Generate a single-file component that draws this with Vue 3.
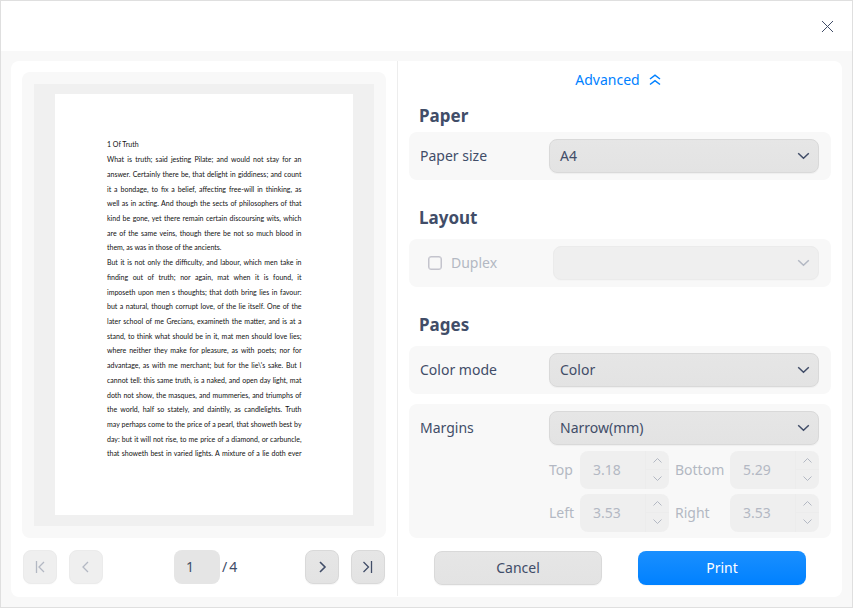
<script setup>
const lines = [
  '1 Of Truth',
  'What is truth; said jesting Pilate; and would not stay for an',
  'answer. Certainly there be, that delight in giddiness; and count',
  'it a bondage, to fix a belief, affecting free-will in thinking, as',
  'well as in acting. And though the sects of philosophers of that',
  'kind be gone, yet there remain certain discoursing wits, which',
  'are of the same veins, though there be not so much blood in',
  'them, as was in those of the ancients.',
  'But it is not only the difficulty, and labour, which men take in',
  'finding out of truth; nor again, mat when it is found, it',
  'imposeth upon men s thoughts; that doth bring lies in favour:',
  'but a natural, though corrupt love, of the lie itself. One of the',
  'later school of me Grecians, examineth the matter, and is at a',
  'stand, to think what should be in it, mat men should love lies;',
  'where neither they make for pleasure, as with poets; nor for',
  "advantage, as with me merchant; but for the lie\\'s sake. But I",
  'cannot tell: this same truth, is a naked, and open day light, mat',
  'doth not show, the masques, and mummeries, and triumphs of',
  'the world, half so stately, and daintily, as candlelights. Truth',
  'may perhaps come to the price of a pearl, that showeth best by',
  'day: but it will not rise, to me price of a diamond, or carbuncle,',
  'that showeth best in varied lights. A mixture of a lie doth ever',
]
const ragged = [0, 7]
const margins = [
  ['Top', '3.18'],
  ['Bottom', '5.29'],
  ['Left', '3.53'],
  ['Right', '3.53'],
]
</script>

<template>
  <div class="window">
    <header class="titlebar">
      <svg class="close" width="11" height="11" viewBox="0 0 11 11"><path d="M0 0L11 11M11 0L0 11" /></svg>
    </header>
    <main class="content">
      <section class="left">
        <div class="preview">
          <div class="backdrop">
            <div class="page">
              <p v-for="(line, i) in lines" :key="i" :class="['line', { ragged: ragged.includes(i) }]">{{ line }}</p>
            </div>
          </div>
        </div>
        <nav class="pager">
          <button class="btn nav off"><svg width="18" height="18" viewBox="0 0 18 18"><path d="M5.5 3V15M13 4L8 9L13 14" /></svg></button>
          <button class="btn nav off second"><svg width="18" height="18" viewBox="0 0 18 18"><path d="M11 4L6 9L11 14" /></svg></button>
          <div class="current">1</div>
          <div class="total"><span>/</span><span>4</span></div>
          <button class="btn nav next"><svg class="heavy" width="18" height="18" viewBox="0 0 18 18"><path d="M7 4L12 9L7 14" /></svg></button>
          <button class="btn nav last"><svg width="18" height="18" viewBox="0 0 18 18"><path d="M4.5 4L9.5 9L4.5 14M12.5 3V15" /></svg></button>
        </nav>
      </section>
      <section class="right">
        <div class="advanced">
          <span>Advanced</span>
          <svg width="12" height="12" viewBox="0 0 12 12"><path d="M1 5L6 1.2L11 5M1 10.5L6 6.7L11 10.5" /></svg>
        </div>
        <h2>Paper</h2>
        <div class="group row">
          <span class="label">Paper size</span>
          <div class="btn select">A4<svg width="13" height="8" viewBox="0 0 13 8"><path d="M1.2 1.2L6.5 6.3L11.8 1.2" /></svg></div>
        </div>
        <h2 class="spaced">Layout</h2>
        <div class="group row">
          <span class="check"></span>
          <span class="label muted">Duplex</span>
          <div class="btn select off short"><svg width="13" height="8" viewBox="0 0 13 8"><path d="M1.2 1.2L6.5 6.3L11.8 1.2" /></svg></div>
        </div>
        <h2 class="spaced">Pages</h2>
        <div class="group row">
          <span class="label">Color mode</span>
          <div class="btn select">Color<svg width="13" height="8" viewBox="0 0 13 8"><path d="M1.2 1.2L6.5 6.3L11.8 1.2" /></svg></div>
        </div>
        <div class="group margins">
          <div class="row">
            <span class="label">Margins</span>
            <div class="btn select">Narrow(mm)<svg width="13" height="8" viewBox="0 0 13 8"><path d="M1.2 1.2L6.5 6.3L11.8 1.2" /></svg></div>
          </div>
          <div class="spins">
            <template v-for="[name, value] in margins" :key="name">
              <span class="muted">{{ name }}</span>
              <div class="spin">
                <span class="value">{{ value }}</span>
                <span class="steps">
                  <svg width="9" height="5" viewBox="0 0 9 5"><path d="M.5 4.5L4.5 .5L8.5 4.5" /></svg>
                  <svg width="9" height="5" viewBox="0 0 9 5"><path d="M.5 .5L4.5 4.5L8.5 .5" /></svg>
                </span>
              </div>
            </template>
          </div>
        </div>
        <footer class="actions">
          <button class="btn action">Cancel</button>
          <button class="btn action primary">Print</button>
        </footer>
      </section>
    </main>
  </div>
</template>

<style>
body {
  margin: 0;
}
</style>

<style scoped>
* {
  box-sizing: border-box;
}
.window {
  width: 853px;
  height: 608px;
  border: 1px solid #dfdfdf;
  background: #f8f8f8;
  color: #414d68;
  font: 14px/20px "Noto Sans", sans-serif;
  display: flex;
  flex-direction: column;
  overflow: hidden;
}
svg {
  display: block;
  fill: none;
  stroke: currentColor;
  stroke-width: 1.3;
}
.titlebar {
  height: 50px;
  flex: none;
  background: #fff;
  display: flex;
  justify-content: flex-end;
  padding: 20px 19px 0 0;
}
.close {
  stroke-width: 1;
}
.content {
  margin: 10px;
  height: 536px;
  width: 831px;
  background: #fff;
  border-radius: 8px;
  display: flex;
}
.left {
  width: 387px;
  height: 535px;
  padding: 11px 11px 0;
  border-right: 1px solid #ededed;
}
.preview {
  width: 364px;
  height: 466px;
  padding: 12px;
  border-radius: 8px;
  background: #f8f8f8;
}
.backdrop {
  width: 340px;
  height: 442px;
  background: #f0f0f0;
  padding: 10px 21px;
}
.page {
  width: 298px;
  height: 421px;
  background: #fff;
  padding: 43.4px 52px 0;
}
.line {
  margin: 0;
  height: 14.72px;
  font: 7px/14.72px Lato, sans-serif;
  color: #111;
  white-space: nowrap;
  width: 194.5px;
  text-align: justify;
  text-align-last: justify;
}
.ragged {
  text-align-last: left;
}
.pager {
  display: flex;
  margin: 12px 0 0 1px;
  width: 362px;
}
.btn {
  border: 1px solid #d9d9d9;
  border-radius: 8px;
  background: linear-gradient(#e6e6e6, #e3e3e3);
  color: #414d68;
  font: inherit;
  height: 34px;
  padding: 0;
  display: flex;
  align-items: center;
  justify-content: center;
  box-shadow: 0 1px 1px rgba(0, 0, 0, 0.04);
}
.btn.off {
  background: #efefef;
  border-color: #ebebeb;
  color: #b3b8c3;
  box-shadow: 0 1px 1px rgba(0, 0, 0, 0.015);
}
.nav {
  width: 34px;
}
.second {
  margin-left: 12px;
}
.heavy {
  stroke-width: 1.6;
}
.current {
  margin-left: 71px;
  width: 46px;
  height: 34px;
  border-radius: 8px;
  background: #e5e5e5;
  padding: 7px 12px;
}
.total {
  margin-left: 2px;
  padding-top: 7px;
  display: flex;
  gap: 2px;
}
.next {
  margin-left: auto;
}
.last {
  margin-left: 12px;
}
.right {
  flex: 1;
  padding: 0 11px;
}
.advanced {
  display: flex;
  align-items: center;
  justify-content: center;
  gap: 9px;
  height: 37px;
  color: #0081ff;
  padding-right: 4px;
}
.advanced svg {
  stroke-width: 1.5;
}
h2 {
  margin: 5px 0 4px 10px;
  font-size: 17px;
  line-height: 25px;
  font-weight: 700;
}
h2.spaced {
  margin: 25px 0 0 10px;
}
.group {
  width: 422px;
  height: 48px;
  border-radius: 8px;
  background: #f8f8f8;
}
h2.spaced + .group {
  margin-top: 9px;
}
.row {
  display: flex;
  align-items: center;
  padding: 0 12px 0 11px;
}
.select {
  width: 270px;
  margin-left: auto;
  justify-content: space-between;
  padding: 0 8px 0 10px;
}
.select.short {
  width: 266px;
}
.select svg {
  margin-left: auto;
  stroke-width: 1.5;
}
.muted {
  color: #b3b8c3;
}
.check {
  width: 14px;
  height: 14px;
  margin: 0 9px 0 8px;
  border: 1px solid #c4c4cd;
  box-shadow: inset 0 0 0 0.5px #c4c4cd;
  border-radius: 3px;
}
.margins {
  height: 134px;
  margin-top: 10px;
  padding-top: 7px;
}
.spins {
  display: grid;
  grid-template-columns: 31px 89px 61px 89px;
  grid-auto-rows: 38px;
  row-gap: 5px;
  margin: 6px 0 0 140px;
  align-items: center;
}
.spins > .muted:nth-child(4n + 3) {
  padding-left: 6px;
}
.spin {
  height: 38px;
  border-radius: 8px;
  background: #efefef;
  color: #b3b8c3;
  display: flex;
  align-items: center;
}
.value {
  width: 65px;
  padding-left: 13px;
}
.steps {
  flex: 1;
  height: 38px;
  border-left: 1px solid #ececec;
  display: flex;
  flex-direction: column;
  align-items: flex-start;
  gap: 13px;
  padding: 7px 0 0 7px;
  background: linear-gradient(#ececec, #ececec) 0 18px / 100% 1px no-repeat;
}
.steps svg {
  stroke-width: 1;
}
.actions {
  display: flex;
  gap: 36px;
  margin: 13px 0 0 25px;
}
.action {
  width: 168px;
}
.primary {
  border-color: transparent;
  background: linear-gradient(#1a8fff, #0081ff) border-box;
  color: #fff;
}
</style>
